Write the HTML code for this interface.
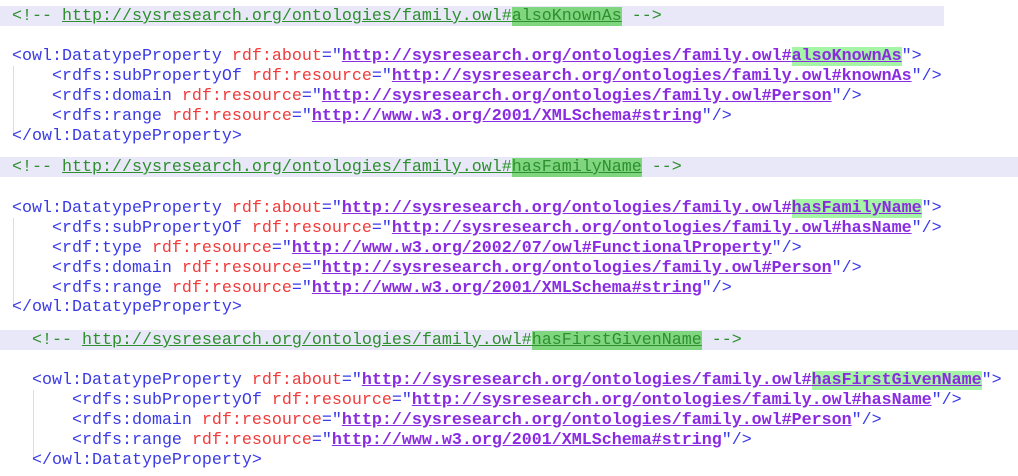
<!DOCTYPE html>
<html><head><meta charset="utf-8"><style>
body{margin:0;width:1018px;height:476px;background:#fff;overflow:hidden;position:relative;font-family:"Liberation Mono",monospace;font-size:16.67px;}
.l{position:absolute;white-space:pre;line-height:20px;height:20px;padding-top:1px;}
.band{position:absolute;background:#e8e8f8;height:20px;}
.t{color:#3a3ae6}.a{color:#f23a3a}.q{color:#3a3ae6}
.u{color:#8a2be2;font-weight:bold;text-decoration:underline}
.c{color:#2d8f2d}.cu{color:#2d8f2d;text-decoration:underline}
.h{background:#a6f5a6}.hc{background:#7fd67f}
.g{position:absolute;width:1px;background:#ddd}
</style></head><body>
<div class="band" style="left:0;top:6px;width:944px"></div>
<div class="band" style="left:0;top:157px;width:1018px"></div>
<div class="band" style="left:0;top:330px;width:1018px"></div>
<div class="g" style="left:13px;top:66px;height:70px"></div>
<div class="g" style="left:13px;top:218px;height:90px"></div>
<div class="g" style="left:33px;top:390px;height:70px"></div>

<div class="l" style="left:12px;top:6px"><span class="c">&lt;!-- </span><span class="cu">http://sysresearch.org/ontologies/family.owl#</span><span class="cu hc">alsoKnownAs</span><span class="c"> --&gt;</span></div>
<div class="l" style="left:12px;top:46px"><span class="t">&lt;owl:DatatypeProperty </span><span class="a">rdf:about</span><span class="q">="</span><span class="u">http://sysresearch.org/ontologies/family.owl#</span><span class="u h">alsoKnownAs</span><span class="q">"&gt;</span></div>
<div class="l" style="left:12px;top:66px"><span class="t">    &lt;rdfs:subPropertyOf </span><span class="a">rdf:resource</span><span class="q">="</span><span class="u">http://sysresearch.org/ontologies/family.owl#knownAs</span><span class="q">"/&gt;</span></div>
<div class="l" style="left:12px;top:86px"><span class="t">    &lt;rdfs:domain </span><span class="a">rdf:resource</span><span class="q">="</span><span class="u">http://sysresearch.org/ontologies/family.owl#Person</span><span class="q">"/&gt;</span></div>
<div class="l" style="left:12px;top:106px"><span class="t">    &lt;rdfs:range </span><span class="a">rdf:resource</span><span class="q">="</span><span class="u">http://www.w3.org/2001/XMLSchema#string</span><span class="q">"/&gt;</span></div>
<div class="l" style="left:12px;top:126px"><span class="t">&lt;/owl:DatatypeProperty&gt;</span></div>

<div class="l" style="left:12px;top:157px"><span class="c">&lt;!-- </span><span class="cu">http://sysresearch.org/ontologies/family.owl#</span><span class="cu hc">hasFamilyName</span><span class="c"> --&gt;</span></div>
<div class="l" style="left:12px;top:198px"><span class="t">&lt;owl:DatatypeProperty </span><span class="a">rdf:about</span><span class="q">="</span><span class="u">http://sysresearch.org/ontologies/family.owl#</span><span class="u h">hasFamilyName</span><span class="q">"&gt;</span></div>
<div class="l" style="left:12px;top:218px"><span class="t">    &lt;rdfs:subPropertyOf </span><span class="a">rdf:resource</span><span class="q">="</span><span class="u">http://sysresearch.org/ontologies/family.owl#hasName</span><span class="q">"/&gt;</span></div>
<div class="l" style="left:12px;top:238px"><span class="t">    &lt;rdf:type </span><span class="a">rdf:resource</span><span class="q">="</span><span class="u">http://www.w3.org/2002/07/owl#FunctionalProperty</span><span class="q">"/&gt;</span></div>
<div class="l" style="left:12px;top:258px"><span class="t">    &lt;rdfs:domain </span><span class="a">rdf:resource</span><span class="q">="</span><span class="u">http://sysresearch.org/ontologies/family.owl#Person</span><span class="q">"/&gt;</span></div>
<div class="l" style="left:12px;top:278px"><span class="t">    &lt;rdfs:range </span><span class="a">rdf:resource</span><span class="q">="</span><span class="u">http://www.w3.org/2001/XMLSchema#string</span><span class="q">"/&gt;</span></div>
<div class="l" style="left:12px;top:297px"><span class="t">&lt;/owl:DatatypeProperty&gt;</span></div>

<div class="l" style="left:32px;top:330px"><span class="c">&lt;!-- </span><span class="cu">http://sysresearch.org/ontologies/family.owl#</span><span class="cu hc">hasFirstGivenName</span><span class="c"> --&gt;</span></div>
<div class="l" style="left:32px;top:370px"><span class="t">&lt;owl:DatatypeProperty </span><span class="a">rdf:about</span><span class="q">="</span><span class="u">http://sysresearch.org/ontologies/family.owl#</span><span class="u h">hasFirstGivenName</span><span class="q">"&gt;</span></div>
<div class="l" style="left:32px;top:390px"><span class="t">    &lt;rdfs:subPropertyOf </span><span class="a">rdf:resource</span><span class="q">="</span><span class="u">http://sysresearch.org/ontologies/family.owl#hasName</span><span class="q">"/&gt;</span></div>
<div class="l" style="left:32px;top:410px"><span class="t">    &lt;rdfs:domain </span><span class="a">rdf:resource</span><span class="q">="</span><span class="u">http://sysresearch.org/ontologies/family.owl#Person</span><span class="q">"/&gt;</span></div>
<div class="l" style="left:32px;top:430px"><span class="t">    &lt;rdfs:range </span><span class="a">rdf:resource</span><span class="q">="</span><span class="u">http://www.w3.org/2001/XMLSchema#string</span><span class="q">"/&gt;</span></div>
<div class="l" style="left:32px;top:450px"><span class="t">&lt;/owl:DatatypeProperty&gt;</span></div>
</body></html>
